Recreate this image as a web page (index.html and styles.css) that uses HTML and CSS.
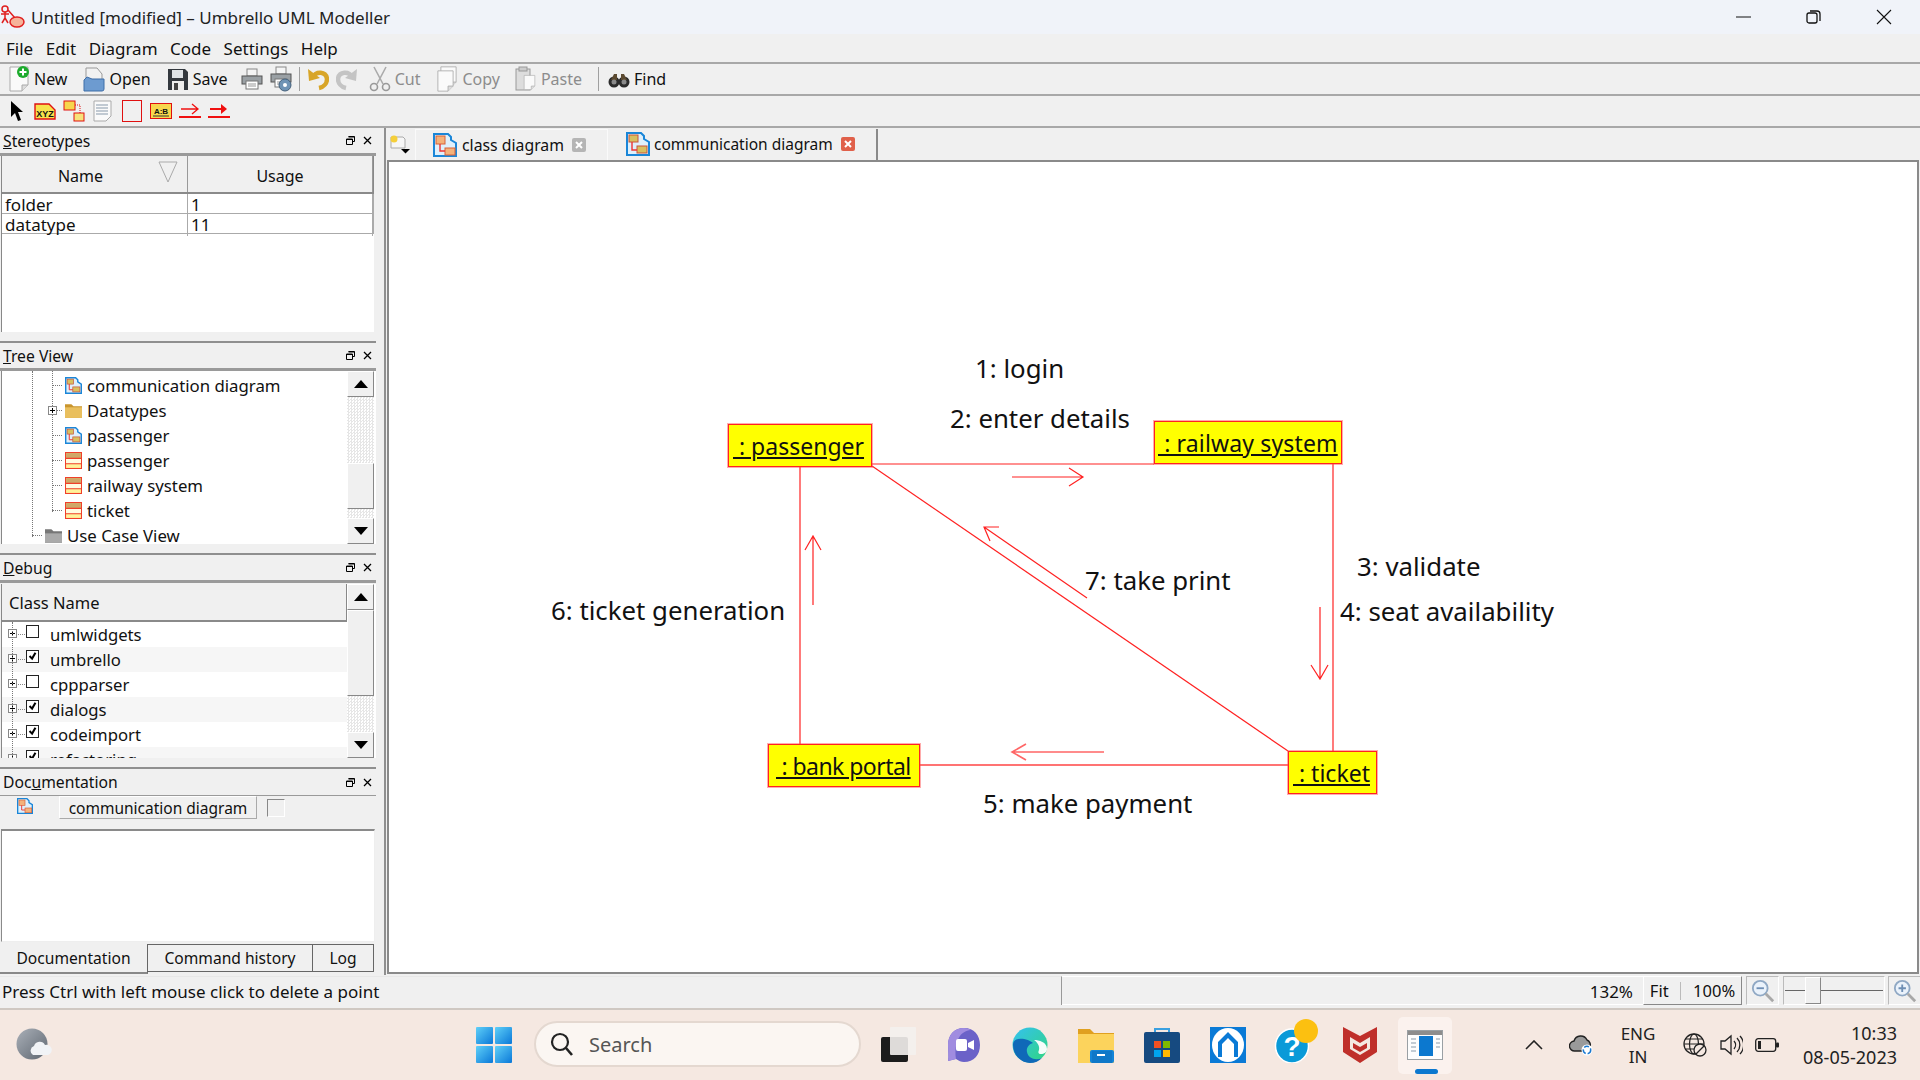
FILE: index.html
```html
<!DOCTYPE html>
<html lang="en">
<head>
<meta charset="utf-8">
<title>Untitled [modified] – Umbrello UML Modeller</title>
<link rel="stylesheet" href="styles.css">
</head>
<body>
<svg class="defs" width="0" height="0">
  <defs>
    <symbol id="i-comm" viewBox="0 0 24 24">
      <path d="M1 1h14l3 3v3l5 3v13H1z" fill="#dff0fb" stroke="#1a86d8" stroke-width="2"/>
      <rect x="3" y="3" width="9" height="7" fill="#d8c060" stroke="#c9553a"/>
      <rect x="11" y="14" width="10" height="7" fill="#d8c060" stroke="#c9553a"/>
      <path d="M6 10v8h5" fill="none" stroke="#e33" stroke-width="1.4"/>
    </symbol>
    <symbol id="i-cdiag" viewBox="0 0 24 24">
      <path d="M1 1h14l3 3v3l5 3v13H1z" fill="#dff0fb" stroke="#1a86d8" stroke-width="2"/>
      <rect x="3" y="3" width="9" height="8" fill="#f4b27a" stroke="#d8623a"/>
      <rect x="12" y="15" width="10" height="7" fill="#f4b27a" stroke="#d8623a"/>
      <path d="M7 11v7h5" fill="none" stroke="#e33" stroke-width="1.4"/>
    </symbol>
    <symbol id="i-class" viewBox="0 0 16 16">
      <rect x=".5" y=".5" width="15" height="15" fill="#fff29a" stroke="#f0402a"/>
      <rect x="1" y="1" width="14" height="5" fill="#cfa868"/>
      <rect x="1" y="6" width="14" height="5" fill="#fffbe0"/>
      <path d="M0 6h16M0 11h16" stroke="#f0402a"/>
    </symbol>
    <symbol id="i-folder" viewBox="0 0 16 16">
      <path d="M0 2h6l2 2h8v11H0z" fill="#c9952e"/>
      <path d="M0 5h16v10H0z" fill="#e9bf5e"/>
    </symbol>
    <symbol id="i-folder-grey" viewBox="0 0 16 16">
      <path d="M0 2h6l2 2h8v11H0z" fill="#777"/>
      <path d="M0 6h16v9H0z" fill="#aaa"/>
    </symbol>
    <symbol id="i-up" viewBox="0 0 14 8"><path d="M7 0l7 8H0z" fill="#000"/></symbol>
    <symbol id="i-down" viewBox="0 0 14 8"><path d="M0 0h14L7 8z" fill="#000"/></symbol>
    <symbol id="i-float" viewBox="0 0 9 9"><path d="M2.5 .5h6v5h-2M.5 3h6v5.500h-6z" fill="none" stroke="#000"/><path d="M2.500 1h6M.5 3.500h6" stroke="#000"/></symbol>
    <symbol id="i-x" viewBox="0 0 9 9"><path d="M1 1l7 7M8 1L1 8" stroke="#000" stroke-width="1.3"/></symbol>
    <symbol id="i-plus" viewBox="0 0 9 9"><rect x=".5" y=".5" width="8" height="8" fill="#fff" stroke="#888"/><path d="M2 4.500h5M4.500 2v5" stroke="#000"/></symbol>
    <symbol id="i-check" viewBox="0 0 13 13"><path d="M3 6l3 3 4-7" fill="none" stroke="#000" stroke-width="2.400"/></symbol>
    <symbol id="i-printer" viewBox="0 0 22 22">
      <rect x="6" y="1" width="10" height="7" fill="#f4f4f4" stroke="#888"/>
      <rect x="1" y="8" width="20" height="8" fill="#9aa0a4" stroke="#555"/>
      <rect x="5" y="13" width="12" height="8" fill="#fff" stroke="#777"/>
      <path d="M7 16h8M7 18h8" stroke="#999"/>
    </symbol>
    <symbol id="i-page" viewBox="0 0 22 26">
      <path d="M2 1h18v18l-6 6H2z" fill="#fafafa" stroke="#aaa"/>
      <path d="M20 19h-6v6" fill="#ddd" stroke="#aaa"/>
    </symbol>
  </defs>
</svg>

<div class="window">
  <header class="titlebar">
    <svg class="app-logo" viewBox="0 0 24 24" width="24" height="24">
      <circle cx="4" cy="4" r="3" fill="none" stroke="#e02020" stroke-width="1.500"/>
      <path d="M4 7v6M0 9h8M4 13l-3 5M4 13l3 5M7 5l7 8" fill="none" stroke="#e02020" stroke-width="1.500"/>
      <ellipse cx="16" cy="17" rx="7" ry="5" fill="#f6b39a" stroke="#e02020" stroke-width="1.500"/>
    </svg>
    <span class="title-text">Untitled [modified] – Umbrello UML Modeller</span>
    <div class="win-controls">
      <svg class="win-btn" viewBox="0 0 16 16" width="16" height="16"><path d="M0 8h15" stroke="#111" stroke-width="1"/></svg>
      <svg class="win-btn" viewBox="0 0 16 16" width="16" height="16"><rect x="1" y="4" width="10" height="10" rx="2" fill="none" stroke="#111" stroke-width="1.300"/><path d="M4 2h7a3 3 0 0 1 3 3v7" fill="none" stroke="#111" stroke-width="1.300"/></svg>
      <svg class="win-btn" viewBox="0 0 16 16" width="16" height="16"><path d="M1 1l14 14M15 1L1 15" stroke="#111" stroke-width="1.100"/></svg>
    </div>
  </header>

  <nav class="menubar">
    <span>File</span><span>Edit</span><span>Diagram</span><span>Code</span><span>Settings</span><span>Help</span>
  </nav>

  <div class="toolbar">
    <div class="tool tool-new">
      <svg class="ticon" viewBox="0 0 22 26"><use href="#i-page"/><circle cx="15" cy="6" r="6" fill="#1cab2c"/><path d="M15 2.500v7M11.500 6h7" stroke="#fff" stroke-width="2"/></svg>
      <span>New</span>
    </div>
    <div class="tool tool-open">
      <svg class="ticon" viewBox="0 0 22 26"><path d="M3 2h11l5 6v8H3z" fill="#f2f2f2" stroke="#999"/><path d="M1 14l3-3 5 2h12v10a2 2 0 0 1-2 2H1z" fill="#6d9bd0" stroke="#3f6ea8"/></svg>
      <span>Open</span>
    </div>
    <div class="tool tool-save">
      <svg class="ticon" viewBox="0 0 22 26"><path d="M1 3h17l3 3v18H1z" fill="#33383e"/><rect x="5" y="4" width="11" height="8" fill="#dfe3e6"/><rect x="5" y="15" width="12" height="9" fill="#eee"/><rect x="7" y="17" width="4" height="7" fill="#444"/></svg>
      <span>Save</span>
    </div>
    <svg class="ticon tool-print"><use href="#i-printer"/></svg>
    <svg class="ticon tool-preview" viewBox="0 0 22 26"><use href="#i-printer" width="22" height="22"/><circle cx="15" cy="19" r="6" fill="#6f93b5" stroke="#44607a"/><circle cx="15" cy="19" r="2" fill="#fff"/></svg>
    <div class="tool-sep tool-sep-a"></div>
    <svg class="ticon tool-undo" viewBox="0 0 22 26"><path d="M6 11c3-6 13-6 14 2 0 4-3 8-8 9" fill="none" stroke="#d8a528" stroke-width="4.500"/><path d="M1 3l1 12 11-3z" fill="#d8a528"/></svg>
    <svg class="ticon tool-redo" viewBox="0 0 22 26"><path d="M16 11C13 5 3 5 2 13c0 4 3 8 8 9" fill="none" stroke="#c4c4c4" stroke-width="4.500"/><path d="M21 3l-1 12-11-3z" fill="#c4c4c4"/></svg>
    <div class="tool tool-cut is-off">
      <svg class="ticon" viewBox="0 0 22 26"><path d="M5 1l9 17M17 1L8 18" stroke="#aaa" stroke-width="1.600"/><circle cx="5" cy="21" r="3.500" fill="none" stroke="#999" stroke-width="1.600"/><circle cx="17" cy="21" r="3.500" fill="none" stroke="#999" stroke-width="1.600"/></svg>
      <span>Cut</span>
    </div>
    <div class="tool tool-copy is-off">
      <svg class="ticon" viewBox="0 0 22 26"><use href="#i-page" width="19" height="22" x="3" y="0"/><use href="#i-page" width="19" height="22" x="0" y="4"/></svg>
      <span>Copy</span>
    </div>
    <div class="tool tool-paste is-off">
      <svg class="ticon" viewBox="0 0 22 26"><rect x="1" y="3" width="14" height="21" fill="#ddd" stroke="#999"/><rect x="4" y="1" width="8" height="4" fill="#ccc" stroke="#999"/><use href="#i-page" width="13" height="17" x="8" y="8"/></svg>
      <span>Paste</span>
    </div>
    <div class="tool-sep tool-sep-b"></div>
    <div class="tool tool-find">
      <svg class="ticon" viewBox="0 0 22 26"><circle cx="6" cy="16" r="5.500" fill="#2b2b2b"/><circle cx="16" cy="16" r="5.500" fill="#2b2b2b"/><path d="M3 14l3-6h3v6zM19 14l-3-6h-3v6z" fill="#5c4a30"/><circle cx="6" cy="16" r="2.500" fill="#8a8a8a"/><circle cx="16" cy="16" r="2.500" fill="#8a8a8a"/></svg>
      <span>Find</span>
    </div>
  </div>

  <div class="toolbar toolbar-uml">
    <svg class="uicon u-arrow" viewBox="0 0 14 22"><path d="M1 1l12 11H8l3 8-3 1-3-8-4 4z" fill="#000"/></svg>
    <svg class="uicon u-xyz" viewBox="0 0 22 22"><path d="M1 4h14l6 6v9H1z" fill="#f7e24c" stroke="#e01010" stroke-width="1.400"/><text x="11" y="17" class="mini-text mini-bold">XYZ</text></svg>
    <svg class="uicon u-xyz2" viewBox="0 0 22 22"><rect x="1" y="1" width="11" height="9" fill="#f7d64c" stroke="#e01010"/><rect x="11" y="13" width="10" height="8" fill="#f7e27a" stroke="#e01010"/><path d="M12 5h5v8" fill="none" stroke="#e01010" stroke-dasharray="1 1"/></svg>
    <svg class="uicon u-note" viewBox="0 0 19 22"><path d="M1 1h17v15l-5 5H1z" fill="#fafafa" stroke="#aaa"/><path d="M3 5h12M3 8h12M3 11h12M3 14h12" stroke="#89a"/></svg>
    <svg class="uicon u-box" viewBox="0 0 20 22"><rect x=".5" y=".5" width="19" height="21" fill="none" stroke="#e01010"/></svg>
    <svg class="uicon u-ab" viewBox="0 0 22 16"><rect x=".5" y=".5" width="21" height="15" fill="#f7d64c" stroke="#e01010"/><text x="11" y="11" class="mini-text mini-ab">A:B</text><path d="M3 13h16" stroke="#333"/></svg>
    <svg class="uicon u-msg" viewBox="0 0 22 16"><path d="M0 14h22" stroke="#f01010" stroke-width="2"/><path d="M2 6h16M13 1l6 5-6 5" fill="none" stroke="#f01010" stroke-width="1.300"/></svg>
    <svg class="uicon u-msg2" viewBox="0 0 22 16"><path d="M0 14h22" stroke="#f01010" stroke-width="2"/><path d="M2 6h12" stroke="#f01010" stroke-width="2"/><path d="M13 1l6 5-6 5z" fill="#f01010"/></svg>
  </div>

  <main class="workspace">
    <aside class="dock">
      <section class="panel panel-stereo">
        <div class="panel-title"><span><u>S</u>tereotypes</span><span class="panel-actions"><svg><use href="#i-float"/></svg><svg><use href="#i-x"/></svg></span></div>
        <div class="stereo-body">
          <div class="stereo-head">
            <div class="head-cell head-name">Name
              <svg class="sort-mark" viewBox="0 0 20 22"><path d="M1 1h18L10 21z" fill="none" stroke="#aaa"/></svg>
            </div>
            <div class="head-cell">Usage</div>
          </div>
          <div class="stereo-row"><div>folder</div><div>1</div></div>
          <div class="stereo-row"><div>datatype</div><div>11</div></div>
        </div>
      </section>

      <section class="panel panel-tree">
        <div class="panel-title"><span><u>T</u>ree View</span><span class="panel-actions"><svg><use href="#i-float"/></svg><svg><use href="#i-x"/></svg></span></div>
        <div class="list-frame tree-frame">
          <div class="tree">
            <i class="guide guide-outer"></i><i class="guide guide-inner"></i>
            <div class="tree-row"><i class="stub"></i><svg class="node-icon"><use href="#i-comm"/></svg><span>communication diagram</span></div>
            <div class="tree-row"><i class="stub"></i><svg class="expander"><use href="#i-plus"/></svg><svg class="node-icon"><use href="#i-folder"/></svg><span>Datatypes</span></div>
            <div class="tree-row"><i class="stub"></i><svg class="node-icon"><use href="#i-comm"/></svg><span>passenger</span></div>
            <div class="tree-row"><i class="stub"></i><svg class="node-icon"><use href="#i-class"/></svg><span>passenger</span></div>
            <div class="tree-row"><i class="stub"></i><svg class="node-icon"><use href="#i-class"/></svg><span>railway system</span></div>
            <div class="tree-row"><i class="stub"></i><svg class="node-icon"><use href="#i-class"/></svg><span>ticket</span></div>
            <div class="tree-row tree-row-top"><i class="stub"></i><svg class="node-icon"><use href="#i-folder-grey"/></svg><span>Use Case View</span></div>
          </div>
          <div class="vscroll">
            <div class="sb-btn"><svg><use href="#i-up"/></svg></div>
            <div class="sb-track tree-track-a"></div>
            <div class="sb-thumb tree-thumb"></div>
            <div class="sb-track tree-track-b"></div>
            <div class="sb-btn"><svg><use href="#i-down"/></svg></div>
          </div>
        </div>
      </section>

      <section class="panel panel-debug">
        <div class="panel-title"><span><u>D</u>ebug</span><span class="panel-actions"><svg><use href="#i-float"/></svg><svg><use href="#i-x"/></svg></span></div>
        <div class="list-frame debug-frame">
          <div class="debug-list">
            <div class="debug-head">Class Name</div>
            <div class="debug-rows">
              <i class="guide guide-debug"></i>
              <div class="debug-row"><svg class="expander"><use href="#i-plus"/></svg><i class="stub2"></i><span class="check"></span><span>umlwidgets</span></div>
              <div class="debug-row"><svg class="expander"><use href="#i-plus"/></svg><i class="stub2"></i><span class="check"><svg><use href="#i-check"/></svg></span><span>umbrello</span></div>
              <div class="debug-row"><svg class="expander"><use href="#i-plus"/></svg><i class="stub2"></i><span class="check"></span><span>cppparser</span></div>
              <div class="debug-row"><svg class="expander"><use href="#i-plus"/></svg><i class="stub2"></i><span class="check"><svg><use href="#i-check"/></svg></span><span>dialogs</span></div>
              <div class="debug-row"><svg class="expander"><use href="#i-plus"/></svg><i class="stub2"></i><span class="check"><svg><use href="#i-check"/></svg></span><span>codeimport</span></div>
              <div class="debug-row"><svg class="expander"><use href="#i-plus"/></svg><i class="stub2"></i><span class="check"><svg><use href="#i-check"/></svg></span><span>refactoring</span></div>
            </div>
          </div>
          <div class="vscroll">
            <div class="sb-btn"><svg><use href="#i-up"/></svg></div>
            <div class="sb-thumb debug-thumb"></div>
            <div class="sb-track debug-track"></div>
            <div class="sb-btn"><svg><use href="#i-down"/></svg></div>
          </div>
        </div>
      </section>

      <section class="panel panel-doc">
        <div class="panel-title panel-title-thin"><span>Doc<u>u</u>mentation</span><span class="panel-actions"><svg><use href="#i-float"/></svg><svg><use href="#i-x"/></svg></span></div>
        <div class="doc-bar">
          <svg class="doc-icon"><use href="#i-cdiag"/></svg>
          <span class="doc-name">communication diagram</span>
          <span class="doc-check"></span>
        </div>
        <div class="doc-text"></div>
        <div class="doc-tabs">
          <span class="doc-tab doc-tab-on">Documentation</span>
          <span class="doc-tab doc-tab-history">Command history</span>
          <span class="doc-tab doc-tab-log">Log</span>
        </div>
      </section>
    </aside>

    <section class="editor">
      <div class="tabbar">
        <svg class="new-tab" viewBox="0 0 22 20"><path d="M2 3h12l2 2v9H2z" fill="#f6f6f6" stroke="#aaa"/><circle cx="5" cy="5" r="3.500" fill="#f5cf3a"/><path d="M12 15h9l-4.500 4.500z" fill="#000"/></svg>
        <div class="tab tab-class">
          <svg class="tab-icon"><use href="#i-cdiag"/></svg>
          <span>class diagram</span>
          <svg class="tab-close" viewBox="0 0 14 14"><rect width="14" height="14" rx="2" fill="#b5b5b5"/><path d="M4 4l6 6M10 4l-6 6" stroke="#fff" stroke-width="2"/></svg>
        </div>
        <div class="tab tab-comm">
          <svg class="tab-icon"><use href="#i-comm"/></svg>
          <span>communication diagram</span>
          <svg class="tab-close" viewBox="0 0 14 14"><rect width="14" height="14" rx="2" fill="#e0604a"/><path d="M4 4l6 6M10 4l-6 6" stroke="#fff" stroke-width="2"/></svg>
        </div>
      </div>
      <div class="canvas">
        <svg class="wires" viewBox="389 162 1528 810" width="1528" height="810">
          <g fill="none" stroke="#f22" stroke-width="1.200">
            <path d="M872 464H1154"/>
            <path d="M800 466V744"/>
            <path d="M1333 463V751"/>
            <path d="M920 765H1288" stroke="#f44" stroke-width="1.600"/>
            <path d="M872 466L1288 751"/>
            <path d="M1012 477H1083M1069 468L1083 477L1069 486"/>
            <path d="M813 605V536M805 550L813 536L821 550"/>
            <path d="M1087 598L984 527M999 527L984 527L990 541"/>
            <path d="M1320 607V679M1311 665L1320 679L1328 665"/>
            <path d="M1104 752H1012M1026 744L1012 752L1026 760" stroke="#f66" stroke-width="1.600"/>
          </g>
        </svg>
        <div class="uml-node n-passenger"><u>&nbsp;: passenger</u></div>
        <div class="uml-node n-railway"><u>&nbsp;: railway system</u></div>
        <div class="uml-node n-bank"><u>&nbsp;: bank portal</u></div>
        <div class="uml-node n-ticket"><u>&nbsp;: ticket</u></div>
        <span class="uml-label l-login">1: login</span>
        <span class="uml-label l-enter">2: enter details</span>
        <span class="uml-label l-validate">3: validate</span>
        <span class="uml-label l-seat">4: seat availability</span>
        <span class="uml-label l-gen">6: ticket generation</span>
        <span class="uml-label l-print">7: take print</span>
        <span class="uml-label l-pay">5: make payment</span>
      </div>
    </section>
  </main>

  <footer class="statusbar">
    <div class="status-msg">Press Ctrl with left mouse click to delete a point</div>
    <div class="status-fill">132%</div>
    <div class="zoom-group"><span>Fit</span><i></i><span>100%</span></div>
    <div class="zoom-btn">
      <svg viewBox="0 0 26 26" width="24" height="24"><circle cx="10" cy="10" r="8" fill="#eaf2fb" stroke="#8fa8c4" stroke-width="2"/><path d="M6 10h8" stroke="#6e8fb5" stroke-width="2"/><path d="M16 16l8 8" stroke="#a8a8a8" stroke-width="3"/></svg>
    </div>
    <div class="zoom-slider"><i class="slider-line"></i><i class="slider-knob"></i></div>
    <div class="zoom-btn zoom-btn-end">
      <svg viewBox="0 0 26 26" width="24" height="24"><circle cx="10" cy="10" r="8" fill="#eaf2fb" stroke="#8fa8c4" stroke-width="2"/><path d="M6 10h8M10 6v8" stroke="#6e8fb5" stroke-width="2"/><path d="M16 16l8 8" stroke="#a8a8a8" stroke-width="3"/></svg>
    </div>
  </footer>
</div>

<div class="taskbar">
  <div class="widget">
    <svg viewBox="0 0 36 34" width="36" height="34"><defs><linearGradient id="moon" x1="0" y1="0" x2="1" y2="1"><stop offset="0" stop-color="#aab0b8"/><stop offset="1" stop-color="#5e6670"/></linearGradient></defs><circle cx="16" cy="16" r="15.500" fill="url(#moon)"/><path d="M17 27a5 5 0 0 1 1-9 6 6 0 0 1 11-1 5 5 0 0 1 3 10z" fill="#f1f3f6"/></svg>
  </div>
  <div class="start">
    <svg viewBox="0 0 36 36" width="36" height="36"><defs><linearGradient id="wing" x1="0" y1="0" x2="1" y2="1"><stop offset="0" stop-color="#5fd0f8"/><stop offset="1" stop-color="#0a78d8"/></linearGradient></defs><rect width="17" height="17" rx="1" fill="url(#wing)"/><rect x="19" width="17" height="17" rx="1" fill="url(#wing)"/><rect y="19" width="17" height="17" rx="1" fill="url(#wing)"/><rect x="19" y="19" width="17" height="17" rx="1" fill="url(#wing)"/></svg>
  </div>
  <div class="search">
    <svg viewBox="0 0 24 26" width="24" height="26"><circle cx="10" cy="11" r="8" fill="none" stroke="#222" stroke-width="2.200"/><path d="M16 17l6 7" stroke="#222" stroke-width="2.600"/></svg>
    <span>Search</span>
  </div>
  <div class="task-icons">
    <div class="task"><svg viewBox="0 0 36 36" width="36" height="36"><rect x="1" y="10" width="27" height="25" rx="2" fill="#1c1c1c"/><rect x="10" y="0" width="26" height="28" rx="1" fill="#f4f1ee" opacity=".9"/></svg></div>
    <div class="task"><svg viewBox="0 0 36 36" width="36" height="36"><path d="M18 1C8 1 2 8 2 18c0 6 1 11 0 16l8-2c3 2 5 3 8 3 10 0 16-7 16-17S28 1 18 1z" fill="#6b62c8"/><path d="M2 18C2 8 8 1 18 1c3 0 5 1 7 2C14 4 8 14 10 32l-8 2c1-5 0-10 0-16z" fill="#a08ce0"/><rect x="10" y="12" width="11" height="12" rx="2" fill="#fff"/><path d="M22 16l6-3v10l-6-3z" fill="#fff"/></svg></div>
    <div class="task"><svg viewBox="0 0 36 36" width="36" height="36"><defs><linearGradient id="edge1" x1="0" y1="0" x2="1" y2="1"><stop offset="0" stop-color="#35c1f1"/><stop offset="1" stop-color="#2fd67e"/></linearGradient></defs><circle cx="18" cy="18" r="17.500" fill="url(#edge1)"/><path d="M1 18c0 10 8 18 17 18 5 0 9-2 12-5-7 3-14 0-15-6-1-4 2-8 6-9-4-4-20-8-20 2z" fill="#0f69b8"/><path d="M22 13c5 0 13 2 13 9 0 3-3 5-6 5s-3-2-2-4c1-4-2-8-5-10z" fill="#fff" opacity=".95"/></svg></div>
    <div class="task"><svg viewBox="0 0 36 36" width="36" height="36"><path d="M0 2h12l4 4h20v30H0z" fill="#e0a020"/><rect y="7" width="36" height="29" fill="#fcd35c"/><rect x="12" y="23" width="24" height="13" rx="2" fill="#1284d8"/><rect x="14" y="24" width="20" height="12" fill="#0f78c8"/><rect x="19" y="27" width="8" height="2" fill="#fff"/></svg></div>
    <div class="task"><svg viewBox="0 0 36 36" width="36" height="36"><path d="M11 6V2h14v4" fill="none" stroke="#3aa0e0" stroke-width="2"/><rect y="5" width="36" height="31" rx="2" fill="#164a80"/><rect x="10" y="14" width="7" height="7" fill="#f25022"/><rect x="19" y="14" width="7" height="7" fill="#7fba00"/><rect x="10" y="23" width="7" height="7" fill="#00a4ef"/><rect x="19" y="23" width="7" height="7" fill="#ffb900"/></svg></div>
    <div class="task"><svg viewBox="0 0 36 36" width="36" height="36"><rect width="36" height="36" fill="#0a7ad6"/><ellipse cx="18" cy="18" rx="16" ry="17" fill="#fff"/><path d="M18 5l10 10v15h-4V17l-6-6-6 6v13H8V15z" fill="#0a7ad6"/><path d="M18 14l4 4v12h-8V18z" fill="#fff"/></svg></div>
    <div class="task task-help"><svg viewBox="0 0 44 44" width="44" height="44"><ellipse cx="18" cy="27" rx="16.500" ry="17" fill="#0a9ad8" stroke="#fff" stroke-width="1.500"/><text x="18" y="37" class="help-q">?</text><circle cx="32" cy="12" r="12" fill="#fcc010"/></svg></div>
    <div class="task"><svg viewBox="0 0 34 36" width="34" height="36"><path d="M0 0l17 9 17-9v25L17 36 0 25z" fill="#bf2f2a"/><path d="M7 10l10 6 10-6v12l-10 6-10-6z" fill="#f4e8e1"/><path d="M10 16l7 4 7-4v5l-7 4-7-4z" fill="#bf2f2a"/></svg></div>
    <div class="task task-active"><svg viewBox="0 0 36 30" width="36" height="30"><rect x=".5" y=".5" width="35" height="29" fill="#fdfdfd" stroke="#9aa0a4"/><rect x="1" y="1" width="34" height="4" fill="#8d8d8d"/><rect x="12" y="6" width="14" height="20" fill="#0c78cf"/><path d="M4 9h5M4 13h5M4 17h5M4 21h5M29 9h4M29 13h4M29 17h4" stroke="#c3ccd4" stroke-width="2"/></svg><i class="task-dot"></i></div>
  </div>
  <div class="tray">
    <svg class="tray-chev" viewBox="0 0 18 10" width="18" height="10"><path d="M1 9l8-8 8 8" fill="none" stroke="#222" stroke-width="1.600"/></svg>
    <svg class="tray-cloud" viewBox="0 0 26 22" width="26" height="22"><path d="M6 17a5 5 0 0 1-1-10 7 7 0 0 1 13-1 5.500 5.500 0 0 1 3 7v4z" fill="#9a9a9a" stroke="#222" stroke-width="1.400"/><circle cx="18" cy="16" r="5.500" fill="#fff"/><circle cx="18" cy="16" r="3.700" fill="none" stroke="#1a78d0" stroke-width="1.500" stroke-dasharray="5 2"/></svg>
    <div class="tray-lang"><span>ENG</span><span>IN</span></div>
    <svg class="tray-globe" viewBox="0 0 24 24" width="24" height="24"><circle cx="11" cy="11" r="10" fill="none" stroke="#222" stroke-width="1.300"/><ellipse cx="11" cy="11" rx="4.500" ry="10" fill="none" stroke="#222" stroke-width="1.200"/><path d="M1 11h20M2.500 6h17M2.500 16h17" stroke="#222" stroke-width="1.200"/><circle cx="17" cy="17" r="6" fill="#f5e8e1" stroke="#222" stroke-width="1.300"/><path d="M13 21l8-8" stroke="#222" stroke-width="1.300"/></svg>
    <svg class="tray-vol" viewBox="0 0 24 24" width="24" height="24"><path d="M2 8h4l6-5v18l-6-5H2z" fill="none" stroke="#222" stroke-width="1.300"/><path d="M15 8a6 6 0 0 1 0 8M18 5a10 10 0 0 1 0 14M21 3a13 13 0 0 1 0 18" fill="none" stroke="#222" stroke-width="1.300"/></svg>
    <svg class="tray-batt" viewBox="0 0 24 14" width="24" height="14"><rect x=".7" y=".7" width="20" height="12.600" rx="2.500" fill="none" stroke="#222" stroke-width="1.300"/><rect x="3" y="3" width="3" height="8" fill="#222"/><rect x="21" y="4.500" width="3" height="5" rx="1" fill="#222"/></svg>
    <div class="tray-clock"><span>10:33</span><span>08-05-2023</span></div>
  </div>
</div>
</body>
</html>
```
FILE: styles.css
```css
* { box-sizing: border-box; }
html, body { margin: 0; padding: 0; }
body {
  width: 1920px; height: 1080px; overflow: hidden;
  display: flex; flex-direction: column;
  font-family: "Noto Sans", "Open Sans", sans-serif;
  font-size: 16px; color: #111; background: #f0f0f0;
}
.defs { position: absolute; }
.window { height: 1008px; display: flex; flex-direction: column; background: #f0f0f0; }
svg { display: block; flex: none; }
i { display: block; }

/* title */
.titlebar { height: 34px; flex: none; display: flex; align-items: center; padding-left: 1px; background: #f0f3f9; }
.app-logo { margin-right: 6px; }
.title-text { font-size: 17px; color: #222; }
.win-controls { margin-left: auto; display: flex; gap: 54px; padding-right: 28px; }

/* menu */
.menubar { height: 30px; flex: none; display: flex; align-items: center; gap: 12.500px; padding-left: 6px; font-size: 17px; border-bottom: 2px solid #a8a8a8; }

/* toolbars */
.toolbar { height: 32px; flex: none; display: flex; align-items: center; padding-left: 8px; border-bottom: 2px solid #a8a8a8; font-size: 16px; }
.tool { display: flex; align-items: center; gap: 4px; }
.ticon { width: 22px; height: 26px; }
.is-off { color: #8c8c8c; }
.tool-open, .tool-save { margin-left: 16px; }
.tool-print { margin-left: 13px; }
.tool-preview { margin-left: 7px; }
.tool-sep { width: 1px; height: 24px; background: #a0a0a0; }
.tool-sep-a { margin: 0 7px; }
.tool-redo { margin-left: 7px; }
.tool-cut { margin-left: 11px; }
.tool-copy { margin-left: 16px; }
.tool-paste { margin-left: 15px; }
.tool-sep-b { margin: 0 9px 0 16px; }
.toolbar-uml { padding-left: 10px; }
.uicon { height: 22px; }
.u-arrow { width: 14px; }
.u-xyz { width: 22px; margin-left: 10px; }
.u-xyz2 { width: 22px; margin-left: 7px; }
.u-note { width: 19px; margin-left: 8px; }
.u-box { width: 20px; margin-left: 10px; }
.u-ab { width: 22px; height: 16px; margin-left: 8px; }
.u-msg { width: 22px; height: 16px; margin-left: 7px; }
.u-msg2 { width: 22px; height: 16px; margin-left: 7px; }
.mini-text { font-family: "Liberation Sans", sans-serif; text-anchor: middle; fill: #111; font-weight: 700; }
.mini-bold { font-size: 9px; }
.mini-ab { font-size: 8px; }

/* layout */
.workspace { flex: 1; min-height: 0; display: flex; }
.dock { width: 376px; flex: none; display: flex; flex-direction: column; }

.panel { flex: none; display: flex; flex-direction: column; border-top: 2px solid #8f8f8f; }
.panel-stereo { height: 213px; border-top: 0; }
.panel-tree { height: 212px; }
.panel-debug { height: 214px; }
.panel-doc { flex: 1; min-height: 0; }
.panel-title { height: 28px; flex: none; display: flex; align-items: center; justify-content: space-between; padding: 0 4px 0 3px; border-bottom: 3px solid #9a9a9a; font-size: 15.700px; }
.panel-title-thin { height: 27px; border-bottom-width: 1px; }
.panel-actions { display: flex; gap: 8px; }
.panel-actions svg { width: 9px; height: 9px; }

/* stereotypes */
.stereo-body { height: 176px; margin: 0 2px 0 1px; background: #fff; border-left: 1px solid #888; }
.stereo-head { display: grid; grid-template-columns: 186px 1fr; height: 38px; border-bottom: 2px solid #8a8a8a; border-right: 1px solid #888; background: #f0f0f0; }
.head-cell { position: relative; display: flex; align-items: center; justify-content: center; padding-top: 3px; border-right: 1px solid #999; }
.head-name { padding-right: 28px; }
.sort-mark { position: absolute; left: 156px; top: 5px; width: 20px; height: 22px; }
.stereo-row { display: grid; grid-template-columns: 186px 1fr; height: 20px; border-bottom: 1px solid #aaa; border-right: 1px solid #aaa; line-height: 22px; font-size: 17px; }
.stereo-row div { padding-left: 3px; border-right: 1px solid #aaa; }

/* lists */
.list-frame { display: flex; background: #fff; }
.tree-frame { height: 173px; margin-left: 1px; border-left: 1px solid #888; }
.tree { position: relative; width: 345px; flex: none; padding-top: 2px; overflow: hidden; }
.tree-row { position: relative; height: 25px; display: flex; align-items: center; padding-left: 63px; font-size: 16.800px; white-space: nowrap; }
.tree-row .node-icon { width: 17px; height: 17px; margin-right: 5px; }
.stub { position: absolute; left: 50px; top: 12px; width: 10px; border-top: 1px dotted #777; }
.tree-row .expander { position: absolute; left: 46px; top: 8px; width: 9px; height: 9px; }
.tree-row-top { height: 21px; padding-top: 4px; padding-left: 43px; line-height: 17px; }
.tree-row-top .stub { left: 30px; }
.guide { position: absolute; border-left: 1px dotted #777; }
.guide-outer { left: 30px; top: 0; height: 166px; }
.guide-inner { left: 50px; top: 0; height: 141px; }

.vscroll { width: 27px; flex: none; display: flex; flex-direction: column; background: #f0f0f0; }
.sb-btn { height: 26px; flex: none; display: flex; align-items: center; justify-content: center; background: #f0f0f0; border: 1px solid; border-color: #fff #888 #888 #fff; }
.sb-btn svg { width: 14px; height: 8px; }
.sb-thumb { background: #f0f0f0; border: 1px solid; border-color: #fff #888 #888 #fff; }
.sb-track { background: repeating-conic-gradient(#e6e6e6 0 25%, #fff 0 50%) 0 0 / 3px 3px; }
.tree-track-a { height: 66px; }
.tree-thumb { height: 46px; }
.tree-track-b { height: 9px; }

.debug-frame { height: 174px; margin-top: 1px; margin-left: 1px; border-left: 1px solid #888; }
.debug-list { width: 345px; flex: none; height: 174px; overflow: hidden; }
.debug-head { height: 38px; display: flex; align-items: center; padding-left: 7px; background: #f0f0f0; border-bottom: 2px solid #8a8a8a; border-right: 1px solid #888; font-size: 16.500px; }
.debug-rows { position: relative; }
.debug-row { position: relative; height: 25px; display: flex; align-items: center; padding-left: 6px; font-size: 16.700px; }
.debug-row:nth-child(odd) { background: #f6f6f6; }
.debug-row .expander { width: 9px; height: 9px; margin-top: -2px; }
.stub2 { width: 9px; margin-left: 1px; border-top: 1px dotted #888; }
.check { width: 13px; height: 13px; margin: -7px 11px 0 -1px; border: 1px solid #222; background: #fff; }
.check svg { width: 11px; height: 11px; }
.guide-debug { left: 10px; top: 0; height: 150px; z-index: 1; }
.debug-thumb { height: 86px; }
.debug-track { flex: 1; background: repeating-conic-gradient(#e6e6e6 0 25%, #fff 0 50%) 0 0 / 3px 3px; }

/* doc */
.doc-bar { height: 33px; flex: none; display: flex; align-items: flex-start; }
.doc-icon { width: 16px; height: 18px; margin: 1px 0 0 17px; }
.doc-name { margin-left: 26px; width: 198px; height: 23px; display: flex; align-items: center; justify-content: center; background: #f0f0f0; border: 1px solid; border-color: #fff #aaa #aaa #fff; font-size: 15.500px; }
.doc-check { width: 18px; height: 18px; margin: 3px 0 0 10px; background: #f0f0f0; border: 1px solid; border-color: #888 #fff #fff #888; }
.doc-text { height: 113px; flex: none; margin: 0 1px; background: #fff; border: 1px solid; border-top: 2px solid #8a8a8a; border-color: #8a8a8a #eee #eee #8a8a8a; }
.doc-tabs { height: 32px; flex: none; display: flex; padding-top: 2px; }
.doc-tab { height: 28px; display: flex; align-items: center; justify-content: center; border: 1px solid #666; font-size: 15.600px; }
.doc-tab-on { width: 148px; border: 0; border-bottom: 2px solid #888; border-right: 1px solid #666; height: 30px; }
.doc-tab-history { width: 165px; border-left: 0; }
.doc-tab-log { width: 61px; border-left: 0; }

/* editor */
.editor { flex: 1; min-width: 0; display: flex; flex-direction: column; margin-left: 8px; border-left: 2px solid #8f8f8f; }
.tabbar { height: 34px; flex: none; display: flex; align-items: center; padding: 0 0 2px 3px; }
.new-tab { width: 22px; height: 20px; }
.tab { height: 31px; display: flex; align-items: center; font-size: 15.800px; }
.tab-class { width: 193px; margin-left: 4px; padding-left: 17px; border: 1px solid #fafafa; border-bottom: 0; }
.tab-class .tab-icon { margin-right: 5px; }
.tab-comm { width: 270px; padding-left: 18px; border-right: 2px solid #8a8a8a; font-size: 15.500px; }
.tab-icon { width: 24px; height: 24px; margin-right: 4px; }
.tab-close { width: 14px; height: 14px; margin-left: 8px; }
.canvas { position: relative; width: 1528px; height: 810px; margin-left: 3px; background: #fff; outline: 2px solid #8a8a8a; overflow: hidden; }
.wires { position: absolute; left: 0; top: 0; }
.uml-node { position: absolute; height: 43px; display: flex; align-items: center; padding-left: 4px; background: #ff0; border: 1px solid #f22; box-shadow: 0 0 0 1px rgba(255, 70, 70, .45); font-size: 23px; white-space: nowrap; color: #111; }
.n-passenger { left: 339px; top: 262px; width: 144px; }
.n-railway { left: 765px; top: 259px; width: 188px; padding-left: 3px; letter-spacing: .15px; }
.n-bank { left: 379px; top: 582px; width: 152px; padding-left: 7px; letter-spacing: -.55px; }
.n-ticket { left: 899px; top: 589px; width: 89px; padding-left: 4px; }
.uml-label { position: absolute; font-size: 25.800px; line-height: 32px; white-space: nowrap; color: #111; }
.l-login { left: 586px; top: 190px; }
.l-enter { left: 561px; top: 240px; }
.l-validate { left: 968px; top: 388px; }
.l-seat { left: 951px; top: 433px; }
.l-gen { left: 162px; top: 432px; }
.l-print { left: 696px; top: 402px; }
.l-pay { left: 594px; top: 625px; }

/* status */
.statusbar { height: 33px; flex: none; display: flex; align-items: stretch; padding: 1px 0 3px; }
.status-msg { width: 1062px; flex: none; padding-left: 2px; border-right: 1px solid #999; border-top: 1px solid #e8e8e8; line-height: 30px; font-size: 17px; white-space: nowrap; }
.status-fill { flex: 1; text-align: right; padding-right: 10px; line-height: 30px; font-size: 17px; border-top: 1px solid #fff; border-bottom: 1px solid #fff; }
.zoom-group { width: 99px; flex: none; display: flex; align-items: center; justify-content: space-around; background: #f0f0f0; border: 1px solid; border-color: #fff #888 #888 #fff; font-size: 16.500px; }
.zoom-group i { width: 1px; height: 18px; background: #bbb; }
.zoom-btn { width: 33px; flex: none; margin-left: 4px; display: flex; align-items: center; justify-content: center; border: 1px solid; border-color: #bbb #fff #fff #bbb; }
.zoom-btn-end { margin-left: 3px; margin-right: -1px; }
.zoom-slider { position: relative; width: 102px; flex: none; margin-left: 4px; border: 1px solid; border-color: #bbb #fff #fff #bbb; }
.slider-line { position: absolute; left: 1px; right: 1px; top: 13px; border-top: 1px solid #666; background: #999; }
.slider-knob { position: absolute; left: 21px; top: 0; bottom: 0; width: 16px; background: #f0f0f0; border: 1px solid; border-color: #fff #888 #888 #fff; }

/* taskbar */
.taskbar { height: 72px; flex: none; display: flex; align-items: center; background: #f5e8e1; border-top: 2px solid #cfc8c2; }
.widget { width: 68px; display: flex; justify-content: center; }
.start { width: 54px; margin-left: 399px; display: flex; justify-content: center; }
.search { width: 327px; height: 46px; margin: 0 0 2px 13px; display: flex; align-items: center; gap: 15px; padding-left: 14px; background: #fbf6f2; border: 2px solid #e4d8d0; border-radius: 23px; font-size: 20px; color: #555; }
.task-icons { display: flex; margin-left: 4px; }
.task { position: relative; width: 66px; height: 57px; display: flex; align-items: center; justify-content: center; }
.task-help svg { margin-left: 4px; margin-top: -8px; }
.help-q { font-family: "Liberation Sans", sans-serif; font-size: 28px; font-weight: 700; fill: #fff; text-anchor: middle; }
.task-active { background: #fbf2ee; border-radius: 5px; width: 54px; margin-left: 5px; }
.task-dot { position: absolute; left: 17px; bottom: 0; width: 23px; height: 5px; background: #0c78cf; border-radius: 3px; }
.tray { flex: 1; display: flex; align-items: center; justify-content: flex-start; }
.tray-chev { margin-left: 73px; }
.tray-cloud { margin-left: 26px; }
.tray-lang { width: 60px; margin-left: 13px; display: flex; flex-direction: column; align-items: center; line-height: 23px; font-size: 17px; color: #222; }
.tray-globe { margin-left: 15px; }
.tray-vol { margin-left: 12px; }
.tray-batt { margin-left: 12px; }
.tray-clock { margin-left: auto; padding-right: 23px; display: flex; flex-direction: column; align-items: flex-end; line-height: 24px; font-size: 18px; color: #222; }
```
